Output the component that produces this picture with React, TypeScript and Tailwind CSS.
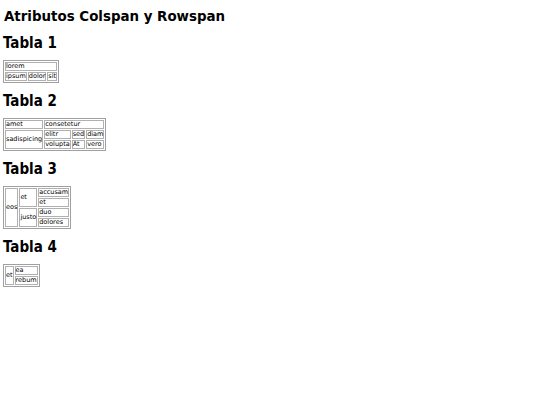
const cell = "border border-[#b0b0b0] p-0 text-left align-middle leading-[7px]";
const tbl = "border-separate border-spacing-[1px] border border-[#a0a0a0] text-[6.5px] mb-[9px]";

function Heading({ children }: { children: React.ReactNode }) {
  return <h2 className="text-[15px] font-bold font-stretch-condensed leading-[18px] mb-[8px]">{children}</h2>;
}

export default function App() {
  return (
    <div className="w-[540px] h-[405px] bg-white text-black px-[3px] pt-[8px]" style={{ fontFamily: '"DejaVu Sans", Verdana, sans-serif' }}>
      <h1 className="text-[13.4px] font-bold leading-[18px] mb-[8px] pl-[1px]">Atributos Colspan y Rowspan</h1>

      <Heading>Tabla 1</Heading>
      <table className={tbl}>
        <tbody>
          <tr>
            <td className={cell} colSpan={3}>lorem</td>
          </tr>
          <tr>
            <td className={cell}>ipsum</td>
            <td className={cell}>dolor</td>
            <td className={cell}>sit</td>
          </tr>
        </tbody>
      </table>

      <Heading>Tabla 2</Heading>
      <table className={tbl}>
        <tbody>
          <tr>
            <td className={cell}>amet</td>
            <td className={cell} colSpan={3}>consetetur</td>
          </tr>
          <tr>
            <td className={cell} rowSpan={2}>sadispicing</td>
            <td className={cell}>elitr</td>
            <td className={cell}>sed</td>
            <td className={cell}>diam</td>
          </tr>
          <tr>
            <td className={cell}>volupta</td>
            <td className={cell}>At</td>
            <td className={cell}>vero</td>
          </tr>
        </tbody>
      </table>

      <Heading>Tabla 3</Heading>
      <table className={tbl}>
        <tbody>
          <tr>
            <td className={cell} rowSpan={4}>eos</td>
            <td className={cell} rowSpan={2}>et</td>
            <td className={cell}>accusam</td>
          </tr>
          <tr>
            <td className={cell}>et</td>
          </tr>
          <tr>
            <td className={cell} rowSpan={2}>justo</td>
            <td className={cell}>duo</td>
          </tr>
          <tr>
            <td className={cell}>dolores</td>
          </tr>
        </tbody>
      </table>

      <Heading>Tabla 4</Heading>
      <table className={tbl}>
        <tbody>
          <tr>
            <td className={cell} rowSpan={2}>et</td>
            <td className={cell}>ea</td>
          </tr>
          <tr>
            <td className={cell}>rebum</td>
          </tr>
        </tbody>
      </table>
    </div>
  );
}
